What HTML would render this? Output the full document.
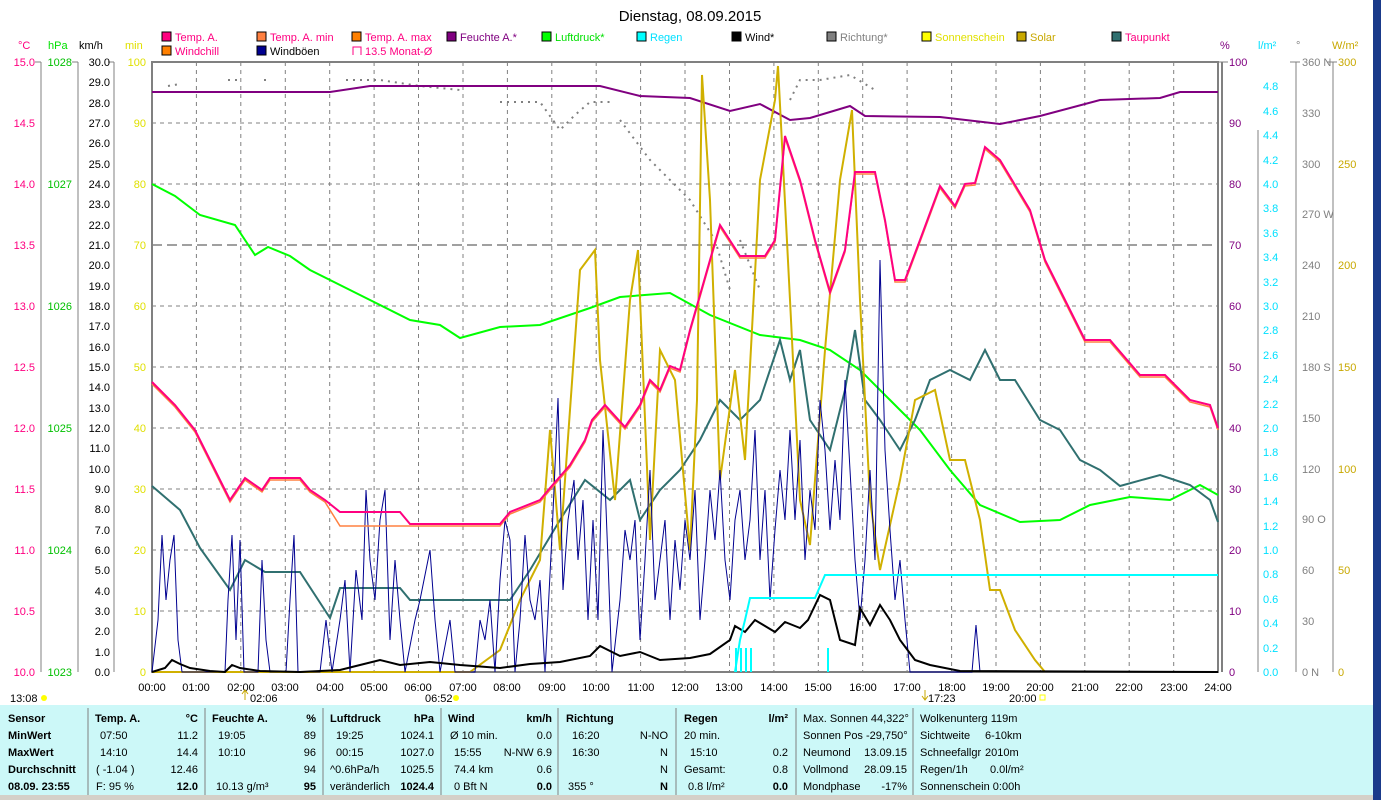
<!DOCTYPE html>
<html><head><meta charset="utf-8"><style>
body{margin:0;width:1381px;height:800px;overflow:hidden;background:#fff;font-family:"Liberation Sans",sans-serif;}
svg{position:absolute;left:0;top:0}
.t{font-family:"Liberation Sans",sans-serif;font-size:11px}
</style></head><body>
<svg width="1381" height="800" viewBox="0 0 1381 800" xmlns="http://www.w3.org/2000/svg">
<rect x="1373" y="0" width="8" height="800" fill="#1a3a8a"/>
<text x="690" y="21" text-anchor="middle" style="font-family:'Liberation Sans',sans-serif;font-size:15px">Dienstag, 08.09.2015</text>
<!-- legend -->
<g class="t">
<rect x="162" y="32" width="9" height="9" fill="#ff0080" stroke="#000"/><text x="175" y="41" fill="#ff0080">Temp. A.</text>
<rect x="257" y="32" width="9" height="9" fill="#ff8040" stroke="#000"/><text x="270" y="41" fill="#ff0080">Temp. A. min</text>
<rect x="352" y="32" width="9" height="9" fill="#ff8000" stroke="#000"/><text x="365" y="41" fill="#ff0080">Temp. A. max</text>
<rect x="447" y="32" width="9" height="9" fill="#800080" stroke="#000"/><text x="460" y="41" fill="#800080">Feuchte A.*</text>
<rect x="542" y="32" width="9" height="9" fill="#00ff00" stroke="#000"/><text x="555" y="41" fill="#00e000">Luftdruck*</text>
<rect x="637" y="32" width="9" height="9" fill="#00ffff" stroke="#000"/><text x="650" y="41" fill="#00e0ff">Regen</text>
<rect x="732" y="32" width="9" height="9" fill="#000" stroke="#000"/><text x="745" y="41" fill="#000">Wind*</text>
<rect x="827" y="32" width="9" height="9" fill="#808080" stroke="#000"/><text x="840" y="41" fill="#808080">Richtung*</text>
<rect x="922" y="32" width="9" height="9" fill="#ffff00" stroke="#000"/><text x="935" y="41" fill="#e0e000">Sonnenschein</text>
<rect x="1017" y="32" width="9" height="9" fill="#c8a800" stroke="#000"/><text x="1030" y="41" fill="#c8a800">Solar</text>
<rect x="1112" y="32" width="9" height="9" fill="#307070" stroke="#000"/><text x="1125" y="41" fill="#ff0080">Taupunkt</text>
<rect x="162" y="46" width="9" height="9" fill="#ff8000" stroke="#000"/><text x="175" y="55" fill="#ff0080">Windchill</text>
<rect x="257" y="46" width="9" height="9" fill="#000090" stroke="#000"/><text x="270" y="55" fill="#000">Windböen</text>
<path d="M353 55V47H361V55" fill="none" stroke="#ff0080"/><text x="365" y="55" fill="#ff0080">13.5 Monat-Ø</text>
</g>
<!-- units -->
<g class="t">
<text x="18" y="49" fill="#ff0080">°C</text><text x="48" y="49" fill="#00e000">hPa</text><text x="79" y="49">km/h</text><text x="125" y="49" fill="#e0e000">min</text>
<text x="1220" y="49" fill="#800080">%</text><text x="1258" y="49" fill="#00e0ff">l/m²</text><text x="1296" y="49" fill="#808080">°</text><text x="1332" y="49" fill="#c8a800">W/m²</text>
</g>
<!-- axis lines -->
<g stroke="#808080" fill="none">
<path d="M41 62V672M78 62V672M114 62V672M1258 130V672M1296 62V672M1333 62V672"/>
<path d="M35 62H41M72 62H78M108 62H114M1218 62H1228M1290 62H1300M1327 62H1337"/>
</g>
<!-- grid -->
<g stroke="#808080" stroke-dasharray="4,4" fill="none">
<path d="M196.4 62V672M240.8 62V672M285.3 62V672M329.7 62V672M374.1 62V672M418.5 62V672M463 62V672M507.4 62V672M551.8 62V672M596.2 62V672M640.6 62V672M685 62V672M729.5 62V672M773.9 62V672M818.3 62V672M862.7 62V672M907.1 62V672M951.6 62V672M996 62V672M1040.4 62V672M1084.8 62V672M1129.2 62V672M1173.7 62V672"/>
<path d="M152 123H1218M152 184H1218M152 306H1218M152 367H1218M152 428H1218M152 489H1218M152 550H1218M152 611H1218"/>
</g>
<path d="M152 245H1218" stroke="#404040" stroke-dasharray="10,5"/>
<rect x="152" y="62" width="1066" height="610" fill="none" stroke="#808080" stroke-width="2"/>
<path d="M1222 62V672" stroke="#808080" stroke-width="2"/>
<!-- left labels -->
<g class="t" text-anchor="end">
<g fill="#ff0080"><text x="35" y="66">15.0</text><text x="35" y="127">14.5</text><text x="35" y="188">14.0</text><text x="35" y="249">13.5</text><text x="35" y="310">13.0</text><text x="35" y="371">12.5</text><text x="35" y="432">12.0</text><text x="35" y="493">11.5</text><text x="35" y="554">11.0</text><text x="35" y="615">10.5</text><text x="35" y="676">10.0</text></g>
<g fill="#00c000"><text x="72" y="66">1028</text><text x="72" y="188">1027</text><text x="72" y="310">1026</text><text x="72" y="432">1025</text><text x="72" y="554">1024</text><text x="72" y="676">1023</text></g>
<g fill="#000"><text x="110" y="66">30.0</text><text x="110" y="86">29.0</text><text x="110" y="107">28.0</text><text x="110" y="127">27.0</text><text x="110" y="147">26.0</text><text x="110" y="168">25.0</text><text x="110" y="188">24.0</text><text x="110" y="208">23.0</text><text x="110" y="229">22.0</text><text x="110" y="249">21.0</text><text x="110" y="269">20.0</text><text x="110" y="290">19.0</text><text x="110" y="310">18.0</text><text x="110" y="330">17.0</text><text x="110" y="351">16.0</text><text x="110" y="371">15.0</text><text x="110" y="391">14.0</text><text x="110" y="412">13.0</text><text x="110" y="432">12.0</text><text x="110" y="452">11.0</text><text x="110" y="473">10.0</text><text x="110" y="493">9.0</text><text x="110" y="513">8.0</text><text x="110" y="534">7.0</text><text x="110" y="554">6.0</text><text x="110" y="574">5.0</text><text x="110" y="595">4.0</text><text x="110" y="615">3.0</text><text x="110" y="635">2.0</text><text x="110" y="656">1.0</text><text x="110" y="676">0.0</text></g>
<g fill="#e0e000"><text x="146" y="66">100</text><text x="146" y="127">90</text><text x="146" y="188">80</text><text x="146" y="249">70</text><text x="146" y="310">60</text><text x="146" y="371">50</text><text x="146" y="432">40</text><text x="146" y="493">30</text><text x="146" y="554">20</text><text x="146" y="615">10</text><text x="146" y="676">0</text></g>
</g>
<!-- right labels -->
<g class="t">
<g fill="#800080"><text x="1229" y="66">100</text><text x="1229" y="127">90</text><text x="1229" y="188">80</text><text x="1229" y="249">70</text><text x="1229" y="310">60</text><text x="1229" y="371">50</text><text x="1229" y="432">40</text><text x="1229" y="493">30</text><text x="1229" y="554">20</text><text x="1229" y="615">10</text><text x="1229" y="676">0</text></g>
<g fill="#00e0ff"><text x="1263" y="90">4.8</text><text x="1263" y="115">4.6</text><text x="1263" y="139">4.4</text><text x="1263" y="164">4.2</text><text x="1263" y="188">4.0</text><text x="1263" y="212">3.8</text><text x="1263" y="237">3.6</text><text x="1263" y="261">3.4</text><text x="1263" y="286">3.2</text><text x="1263" y="310">3.0</text><text x="1263" y="334">2.8</text><text x="1263" y="359">2.6</text><text x="1263" y="383">2.4</text><text x="1263" y="408">2.2</text><text x="1263" y="432">2.0</text><text x="1263" y="456">1.8</text><text x="1263" y="481">1.6</text><text x="1263" y="505">1.4</text><text x="1263" y="530">1.2</text><text x="1263" y="554">1.0</text><text x="1263" y="578">0.8</text><text x="1263" y="603">0.6</text><text x="1263" y="627">0.4</text><text x="1263" y="652">0.2</text><text x="1263" y="676">0.0</text></g>
<g fill="#808080"><text x="1302" y="66">360 N</text><text x="1302" y="117">330</text><text x="1302" y="168">300</text><text x="1302" y="218">270 W</text><text x="1302" y="269">240</text><text x="1302" y="320">210</text><text x="1302" y="371">180 S</text><text x="1302" y="422">150</text><text x="1302" y="473">120</text><text x="1302" y="523">90 O</text><text x="1302" y="574">60</text><text x="1302" y="625">30</text><text x="1302" y="676">0 N</text></g>
<g fill="#c8a800"><text x="1338" y="66">300</text><text x="1338" y="168">250</text><text x="1338" y="269">200</text><text x="1338" y="371">150</text><text x="1338" y="473">100</text><text x="1338" y="574">50</text><text x="1338" y="676">0</text></g>
</g>
<!-- Richtung dots -->
<g stroke="#808080" stroke-width="2" stroke-dasharray="2,5" fill="none">
<path d="M168 86L180 84M228 80H240M264 80H266M346 80H380L420 86L460 90M500 102H540L560 130L575 115L590 102H610M620 120L650 160L690 200L715 240L730 290M740 240L760 290M790 100L800 80L820 80L850 75L875 90"/>
</g>
<!-- Luftdruck -->
<polyline fill="none" stroke="#00ff00" stroke-width="2" points="152,184 175,196 200,215 235,225 255,255 268,247 290,256 310,270 340,285 370,300 410,320 440,325 460,338 500,327 540,325 590,308 620,297 670,293 710,315 760,335 800,340 830,350 860,370 890,400 920,430 950,470 980,505 1020,522 1060,520 1090,505 1130,497 1170,500 1200,485 1218,495"/>
<!-- Feuchte -->
<polyline fill="none" stroke="#800080" stroke-width="2" points="152,92 330,92 370,86 600,86 640,96 690,98 730,111 760,104 790,120 810,118 850,106 865,116 940,117 1000,124 1040,116 1100,100 1160,98 1180,92 1218,92"/>
<!-- Taupunkt -->
<polyline fill="none" stroke="#307070" stroke-width="2" points="152,486 180,510 200,548 230,590 245,560 265,572 300,572 330,618 340,588 400,588 410,600 510,600 530,570 560,520 585,480 610,500 630,480 640,520 660,490 680,470 700,440 720,400 740,420 760,400 780,340 790,380 800,350 810,420 830,450 845,390 855,330 865,400 880,420 900,450 915,420 930,380 950,370 970,380 985,350 1000,380 1015,380 1040,420 1060,430 1080,460 1100,470 1120,486 1160,475 1190,485 1210,500 1218,522"/>
<!-- Solar -->
<polyline fill="none" stroke="#d0b000" stroke-width="2" points="152,672 470,672 500,650 520,600 540,560 550,430 560,550 580,270 595,250 600,360 615,500 630,300 638,250 650,540 660,350 675,380 690,550 697,400 702,75 710,200 720,480 735,370 745,460 760,180 775,100 778,66 790,300 800,500 810,545 825,350 840,180 852,110 860,300 870,500 880,570 900,480 915,400 935,390 950,460 965,460 980,520 990,590 1000,590 1015,630 1035,660 1045,672"/>
<!-- Windböen -->
<polyline fill="none" stroke="#000090" stroke-width="1" points="152,672 158,620 162,535 166,600 170,560 174,535 178,640 182,672 225,672 228,600 232,535 236,640 240,540 244,672 258,672 262,560 266,640 270,672 286,672 290,600 294,535 298,672 320,672 326,620 332,672 340,620 345,580 350,672 356,570 362,620 366,490 370,560 375,600 380,520 385,490 390,640 395,560 400,620 405,672 415,620 420,600 430,550 435,620 440,672 450,620 455,672 475,672 480,620 485,640 490,600 495,672 500,580 505,520 510,540 515,672 520,620 525,535 530,600 535,620 540,580 545,672 552,535 558,398 563,590 568,520 574,480 578,560 583,500 588,620 593,520 598,620 603,430 608,560 612,672 620,600 625,530 630,560 635,520 640,640 645,560 650,470 655,600 660,560 665,520 670,620 675,540 680,590 685,520 690,560 695,490 700,620 705,560 710,490 715,540 720,470 725,560 730,600 735,520 740,490 745,560 750,520 755,430 760,560 765,490 770,600 775,530 780,470 785,520 790,430 795,520 800,440 805,560 810,490 815,530 820,400 825,450 830,530 835,460 840,520 845,380 850,470 855,560 860,620 865,560 870,470 875,560 880,260 885,450 890,530 895,600 900,560 905,620 910,672 972,672 976,625 980,672"/>
<!-- Temp -->
<polyline fill="none" stroke="#ff8040" stroke-width="1.5" points="152,384 175,407 195,432 230,502 245,480 262,492 270,480 300,480 310,492 325,502 340,526 400,526 410,526 500,526 510,514 540,502 550,490 570,467 585,442 592,422 605,407 625,429 640,407 650,382 660,392 670,368 680,372 690,332 710,262 720,227 740,258 765,258 775,242 785,138 800,182 815,242 830,294 845,252 855,174 875,174 885,222 895,282 905,282 920,242 940,188 955,208 965,186 975,185 985,149 1000,162 1030,212 1045,262 1065,302 1085,342 1110,342 1140,377 1165,377 1190,402 1210,407 1218,430"/>
<polyline fill="none" stroke="#ff0080" stroke-width="2" points="152,382 175,405 195,430 230,500 245,478 262,490 270,478 300,478 310,490 325,500 340,512 400,512 410,524 500,524 510,512 540,500 550,488 570,465 585,440 592,420 605,405 625,427 640,405 650,380 660,390 670,366 680,370 690,330 710,260 720,225 740,256 765,256 775,240 785,136 800,180 815,240 830,292 845,250 855,172 875,172 885,220 895,280 905,280 920,240 940,186 955,206 965,184 975,183 985,147 1000,160 1030,210 1045,260 1065,300 1085,340 1110,340 1140,375 1165,375 1190,400 1210,405 1218,428"/>
<!-- Wind -->
<polyline fill="none" stroke="#000" stroke-width="2" points="152,672 165,668 172,660 180,664 190,668 210,671 225,672 232,665 240,668 260,671 300,672 340,670 360,665 380,660 400,665 430,662 460,665 500,668 530,664 560,662 590,656 600,646 620,656 640,652 660,660 690,658 710,654 730,640 735,626 745,632 755,620 765,626 775,632 785,622 800,628 808,620 820,595 830,600 840,640 855,645 860,608 870,625 880,605 890,620 900,640 915,660 930,665 960,671 1218,672"/>
<!-- Regen -->
<polyline fill="none" stroke="#00ffff" stroke-width="2" points="735,672 740,640 745,620 750,598 815,598 825,575 1218,575"/>
<path d="M736 672V648M741 672V648M746 672V648M751 672V648M828 672V648" stroke="#00ffff" stroke-width="2"/>
<!-- time axis -->
<g class="t" text-anchor="middle">
<text x="152" y="691">00:00</text><text x="196" y="691">01:00</text><text x="241" y="691">02:00</text><text x="285" y="691">03:00</text><text x="330" y="691">04:00</text><text x="374" y="691">05:00</text><text x="418" y="691">06:00</text><text x="463" y="691">07:00</text><text x="507" y="691">08:00</text><text x="552" y="691">09:00</text><text x="596" y="691">10:00</text><text x="641" y="691">11:00</text><text x="685" y="691">12:00</text><text x="729" y="691">13:00</text><text x="774" y="691">14:00</text><text x="818" y="691">15:00</text><text x="863" y="691">16:00</text><text x="907" y="691">17:00</text><text x="952" y="691">18:00</text><text x="996" y="691">19:00</text><text x="1040" y="691">20:00</text><text x="1085" y="691">21:00</text><text x="1129" y="691">22:00</text><text x="1174" y="691">23:00</text><text x="1218" y="691">24:00</text>
</g>
<g class="t">
<text x="10" y="702">13:08</text><circle cx="44" cy="698" r="3" fill="#ffff00"/>
<path d="M245 700V690M242 694L245 690L248 694" stroke="#c8a800" fill="none"/>
<text x="250" y="702">02:06</text><text x="425" y="702">06:52</text><circle cx="456" cy="698" r="3" fill="#ffff00"/>
<path d="M925 690V700M922 696L925 700L928 696" stroke="#c8a800" fill="none"/>
<text x="928" y="702">17:23</text><text x="1009" y="702">20:00</text><rect x="1040" y="695" width="5" height="5" fill="none" stroke="#ffff00"/>
</g>
<!-- table -->
<rect x="0" y="705" width="1373" height="90" fill="#ccf8f8"/>
<path d="M88 708V795M205 708V795M323 708V795M441 708V795M558 708V795M676 708V795M796 708V795M913 708V795" stroke="#808080"/>
<rect x="0" y="795" width="1373" height="5" fill="#d4d0c8"/>
<g class="t">
<g font-weight="bold"><text x="8" y="722">Sensor</text><text x="8" y="739">MinWert</text><text x="8" y="756">MaxWert</text><text x="8" y="773">Durchschnitt</text><text x="8" y="790">08.09. 23:55</text>
<text x="95" y="722">Temp. A.</text><text x="198" y="722" text-anchor="end">°C</text>
<text x="212" y="722">Feuchte A.</text><text x="316" y="722" text-anchor="end">%</text>
<text x="330" y="722">Luftdruck</text><text x="434" y="722" text-anchor="end">hPa</text>
<text x="448" y="722">Wind</text><text x="552" y="722" text-anchor="end">km/h</text>
<text x="566" y="722">Richtung</text>
<text x="684" y="722">Regen</text><text x="788" y="722" text-anchor="end">l/m²</text></g>
<text x="100" y="739">07:50</text><text x="198" y="739" text-anchor="end">11.2</text>
<text x="100" y="756">14:10</text><text x="198" y="756" text-anchor="end">14.4</text>
<text x="96" y="773">( -1.04 )</text><text x="198" y="773" text-anchor="end">12.46</text>
<text x="96" y="790">F: 95 %</text><text x="198" y="790" text-anchor="end" font-weight="bold">12.0</text>
<text x="218" y="739">19:05</text><text x="316" y="739" text-anchor="end">89</text>
<text x="218" y="756">10:10</text><text x="316" y="756" text-anchor="end">96</text>
<text x="316" y="773" text-anchor="end">94</text>
<text x="216" y="790">10.13 g/m³</text><text x="316" y="790" text-anchor="end" font-weight="bold">95</text>
<text x="336" y="739">19:25</text><text x="434" y="739" text-anchor="end">1024.1</text>
<text x="336" y="756">00:15</text><text x="434" y="756" text-anchor="end">1027.0</text>
<text x="330" y="773">^0.6hPa/h</text><text x="434" y="773" text-anchor="end">1025.5</text>
<text x="330" y="790">veränderlich</text><text x="434" y="790" text-anchor="end" font-weight="bold">1024.4</text>
<text x="450" y="739">Ø 10 min.</text><text x="552" y="739" text-anchor="end">0.0</text>
<text x="454" y="756">15:55</text><text x="552" y="756" text-anchor="end">N-NW 6.9</text>
<text x="454" y="773">74.4 km</text><text x="552" y="773" text-anchor="end">0.6</text>
<text x="454" y="790">0 Bft N</text><text x="552" y="790" text-anchor="end" font-weight="bold">0.0</text>
<text x="572" y="739">16:20</text><text x="668" y="739" text-anchor="end">N-NO</text>
<text x="572" y="756">16:30</text><text x="668" y="756" text-anchor="end">N</text>
<text x="668" y="773" text-anchor="end">N</text>
<text x="568" y="790">355 °</text><text x="668" y="790" text-anchor="end" font-weight="bold">N</text>
<text x="684" y="739">20 min.</text>
<text x="690" y="756">15:10</text><text x="788" y="756" text-anchor="end">0.2</text>
<text x="684" y="773">Gesamt:</text><text x="788" y="773" text-anchor="end">0.8</text>
<text x="688" y="790">0.8 l/m²</text><text x="788" y="790" text-anchor="end" font-weight="bold">0.0</text>
<text x="803" y="722">Max. Sonnen 44,322°</text>
<text x="803" y="739">Sonnen Pos  -29,750°</text>
<text x="803" y="756">Neumond</text><text x="907" y="756" text-anchor="end">13.09.15</text>
<text x="803" y="773">Vollmond</text><text x="907" y="773" text-anchor="end">28.09.15</text>
<text x="803" y="790">Mondphase</text><text x="907" y="790" text-anchor="end">-17%</text>
<text x="920" y="722">Wolkenunterg   119m</text>
<text x="920" y="739">Sichtweite</text><text x="985" y="739">6-10km</text>
<text x="920" y="756">Schneefallgr</text><text x="985" y="756">2010m</text>
<text x="920" y="773">Regen/1h</text><text x="990" y="773">0.0l/m²</text>
<text x="920" y="790">Sonnenschein  0:00h</text>
</g>
</svg>
</body></html>
